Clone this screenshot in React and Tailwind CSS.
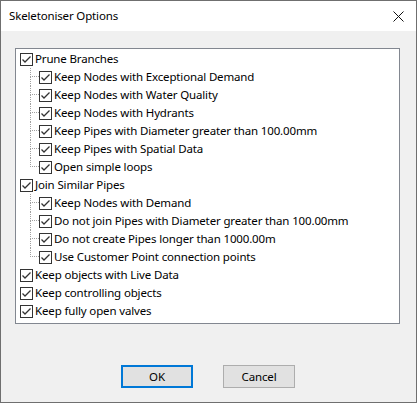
import React from 'react'

const font = { fontFamily: '"Noto Sans", "Open Sans", sans-serif' }

function Check() {
  return (
    <span className="w-[13px] h-[13px] shrink-0 border border-[#333333] bg-white flex items-center justify-center">
      <svg width="11" height="11" viewBox="0 0 11 11" fill="none">
        <path d="M1.5 5.5L4 8L9.5 2.5" stroke="#333333" strokeWidth="1.3" />
      </svg>
    </span>
  )
}

function Row({ label }) {
  return (
    <div className="h-[18px] flex items-center pl-[4px]">
      <Check />
      <span className="ml-[2px] whitespace-nowrap">{label}</span>
    </div>
  )
}

function Child({ label, last }) {
  return (
    <div className="h-[18px] flex items-stretch pl-[14px]">
      <span className="w-[9px] flex flex-col">
        <span className="h-[9px] border-l border-b border-dotted border-[#a0a0a0]" />
        <span className={last ? 'flex-1' : 'flex-1 border-l border-dotted border-[#a0a0a0]'} />
      </span>
      <span className="flex items-center">
        <Check />
        <span className="ml-[2px] whitespace-nowrap">{label}</span>
      </span>
    </div>
  )
}

function Group({ label, items }) {
  return (
    <div>
      <Row label={label} />
      {items.map((it, i) => (
        <Child key={it} label={it} last={i === items.length - 1} />
      ))}
    </div>
  )
}

export default function App() {
  const prune = [
    'Keep Nodes with Exceptional Demand',
    'Keep Nodes with Water Quality',
    'Keep Nodes with Hydrants',
    'Keep Pipes with Diameter greater than 100.00mm',
    'Keep Pipes with Spatial Data',
    'Open simple loops',
  ]
  const join = [
    'Keep Nodes with Demand',
    'Do not join Pipes with Diameter greater than 100.00mm',
    'Do not create Pipes longer than 1000.00m',
    'Use Customer Point connection points',
  ]

  return (
    <div className="w-[417px] h-[403px] border border-[#6f6f6f] flex flex-col text-[11.5px] tracking-[-0.15px] text-black" style={font}>
      {/* Title bar */}
      <div className="h-[30px] bg-white flex items-center justify-between pl-[8px] pr-[12px] shrink-0">
        <span>Skeletoniser Options</span>
        <svg width="11" height="11" viewBox="0 0 11 11" fill="none">
          <path d="M0.5 0.5L10.5 10.5M10.5 0.5L0.5 10.5" stroke="#111" strokeWidth="1" />
        </svg>
      </div>

      <div className="flex-1 bg-[#f0f0f0] flex flex-col">
        <div className="ml-[14px] mt-[17px] w-[385px] h-[276px] bg-white border border-[#828790] pt-[1px] leading-none">
          <Group label="Prune Branches" items={prune} />
          <Group label="Join Similar Pipes" items={join} />
          <Row label="Keep objects with Live Data" />
          <Row label="Keep controlling objects" />
          <Row label="Keep fully open valves" />
        </div>

        <div className="flex mt-[41px] pl-[120px] gap-[30px]">
          <button className="w-[72px] h-[23px] bg-[#e1e1e1] border-2 border-[#0078d7] flex items-center justify-center">
            OK
          </button>
          <button className="w-[72px] h-[23px] bg-[#e1e1e1] border border-[#adadad] flex items-center justify-center">
            Cancel
          </button>
        </div>
      </div>
    </div>
  )
}
